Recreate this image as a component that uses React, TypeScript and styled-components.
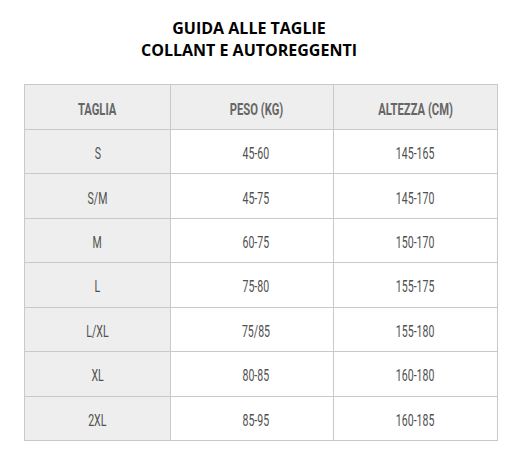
import React from "react";
import styled, { createGlobalStyle } from "styled-components";

const GlobalStyle = createGlobalStyle`
  html, body {
    margin: 0;
    padding: 0;
    background: #ffffff;
  }
  body {
    font-family: "Liberation Sans", Arial, sans-serif;
  }
`;

const Page = styled.div`
  width: 522px;
  height: 456px;
  box-sizing: border-box;
  padding: 17px 0 0 24px;
  background: #ffffff;
`;

const Title = styled.h1`
  margin: 0 0 23px 0;
  width: 450px;
  text-align: center;
  font-family: "Open Sans", "Noto Sans", sans-serif;
  font-weight: 700;
  font-size: 16px;
  line-height: 22px;
  color: #000000;
`;

const Grid = styled.div`
  display: grid;
  grid-template-columns: 145px 162px 163px;
  grid-template-rows: 44px repeat(7, 43.43px);
  gap: 1px;
  width: 472px;
  border: 1px solid #c9c9c9;
  background: #c9c9c9;
`;

const Cell = styled.div<{ $head?: boolean; $shade?: boolean; $shift?: boolean }>`
  display: flex;
  align-items: center;
  justify-content: center;
  box-sizing: border-box;
  padding-top: ${(p) => (p.$head ? "3px" : "4px")};
  padding-left: ${(p) => (p.$shift ? "8px" : "0")};
  background: ${(p) => (p.$head || p.$shade ? "#eeeeee" : "#ffffff")};
  color: ${(p) => (p.$head ? "#666666" : "#505050")};
  font-family: Roboto, "Liberation Sans", sans-serif;
  font-weight: ${(p) => (p.$head ? 700 : 400)};
  font-size: ${(p) => (p.$head ? "17px" : "16.5px")};
`;

const Label = styled.span<{ $head?: boolean }>`
  display: inline-block;
  transform: scaleX(${(p) => (p.$head ? 0.66 : 0.64)});
  white-space: nowrap;
`;

const rows: [string, string, string][] = [
  ["S", "45-60", "145-165"],
  ["S/M", "45-75", "145-170"],
  ["M", "60-75", "150-170"],
  ["L", "75-80", "155-175"],
  ["L/XL", "75/85", "155-180"],
  ["XL", "80-85", "160-180"],
  ["2XL", "85-95", "160-185"],
];

const headers = ["TAGLIA", "PESO (KG)", "ALTEZZA (CM)"];

export default function App() {
  return (
    <>
      <GlobalStyle />
      <Page>
        <Title>
          GUIDA ALLE TAGLIE
          <br />
          COLLANT E AUTOREGGENTI
        </Title>
        <Grid>
          {headers.map((h, i) => (
            <Cell key={h} $head $shift={i === 1}>
              <Label $head>{h}</Label>
            </Cell>
          ))}
          {rows.map((r) =>
            r.map((v, i) => (
              <Cell key={r[0] + i} $shade={i === 0} $shift={i === 1}>
                <Label>{v}</Label>
              </Cell>
            ))
          )}
        </Grid>
      </Page>
    </>
  );
}
